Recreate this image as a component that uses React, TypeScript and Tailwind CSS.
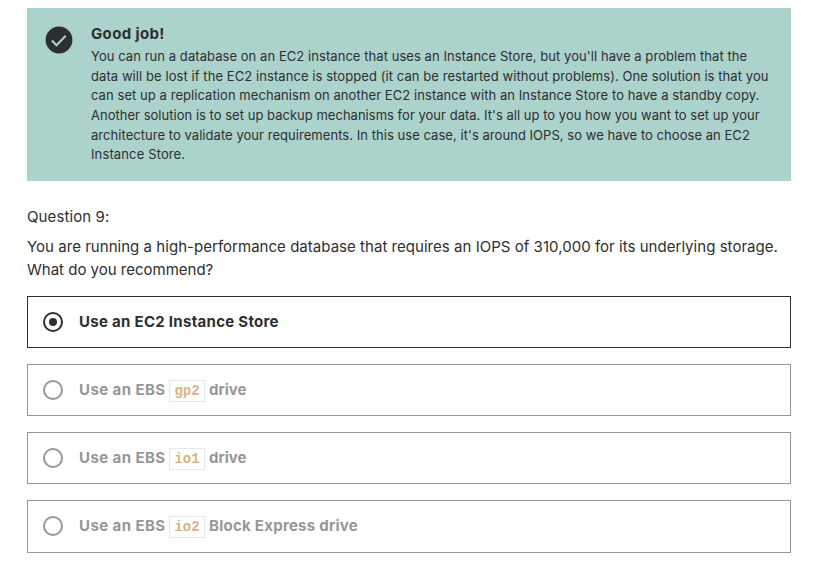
const bodyLines = [
  { text: "You can run a database on an EC2 instance that uses an Instance Store, but you'll have a problem that the", cls: "tracking-[0.06px]" },
  { text: "data will be lost if the EC2 instance is stopped (it can be restarted without problems). One solution is that you", cls: "tracking-[0.073px]" },
  { text: "can set up a replication mechanism on another EC2 instance with an Instance Store to have a standby copy.", cls: "tracking-[0.066px]" },
  { text: "Another solution is to set up backup mechanisms for your data. It's all up to you how you want to set up your", cls: "tracking-[0.02px]" },
  { text: "architecture to validate your requirements. In this use case, it's around IOPS, so we have to choose an EC2", cls: "tracking-[0.046px]" },
  { text: "Instance Store.", cls: "tracking-[0.13px]" },
];

const options = [
  { before: "Use an EBS", code: "gp2", after: "drive", height: "h-[52px]", tracking: "" },
  { before: "Use an EBS", code: "io1", after: "drive", height: "h-[52px]", tracking: "" },
  { before: "Use an EBS", code: "io2", after: "Block Express drive", height: "h-[53px] pb-px", tracking: "tracking-[0.26px]" },
];

function CheckCircle() {
  return (
    <svg viewBox="0 0 32 32" className="size-8 shrink-0" aria-hidden="true">
      <circle cx="16" cy="16" r="13.4" fill="#2d2f31" />
      <path d="M8.9 16.6l4.6 4.6 9.2-9.4" fill="none" stroke="#acd2cc" strokeWidth="2.1" />
    </svg>
  );
}

export default function App() {
  return (
    <main className="h-[585px] w-[838px] overflow-hidden bg-white pt-2 pl-[27px] font-['Inter',sans-serif] text-[#2d2f31]">
      <section className="flex h-[173px] w-[764px] gap-4 bg-[#acd2cc] p-4">
        <CheckCircle />
        <div>
          <h2 className="mb-1 text-[15px] leading-[19.2px] font-bold tracking-[0.36px]">Good job!</h2>
          {bodyLines.map((line) => (
            <p key={line.text} className={`text-[13px] leading-[19.6px] whitespace-nowrap ${line.cls}`}>
              <span>{line.text}</span>
            </p>
          ))}
        </div>
      </section>
      <div className="mt-[25px] text-[15px] leading-[22.4px] tracking-[0.1px]">Question 9:</div>
      <div className="mt-2 text-[15px] leading-[22.8px] whitespace-nowrap">
        <p className="tracking-[0.035px]">You are running a high-performance database that requires an IOPS of 310,000 for its underlying storage.</p>
        <p>What do you recommend?</p>
      </div>
      <div className="mt-[14px] flex w-[764px] flex-col gap-4 text-[15px] font-bold">
        <div className="flex h-[52px] items-center gap-4 border border-[#2d2f31] pl-[15px]">
          <span className="flex size-5 items-center justify-center rounded-full border-2 border-[#2d2f31]">
            <span className="size-2 rounded-full bg-[#2d2f31]" />
          </span>
          <span className="tracking-[0.29px]">Use an EC2 Instance Store</span>
        </div>
        {options.map((o) => (
          <div key={o.code} className={`flex items-center gap-4 border border-[#969798] pl-[15px] text-[#969798] ${o.height}`}>
            <span className="size-5 rounded-full border-2 border-[#969798]" />
            <span className="flex items-center">
              <span className="w-[90px] tracking-[0.42px]">{o.before}</span>
              <code className="mt-0.5 mr-1 flex h-[22px] w-9 items-center justify-center border border-[#e4e8eb] font-['Liberation_Mono',monospace] text-sm">
                <span className="text-[#d9b382]">{o.code}</span>
              </code>
              <span className={o.tracking}>{o.after}</span>
            </span>
          </div>
        ))}
      </div>
    </main>
  );
}
